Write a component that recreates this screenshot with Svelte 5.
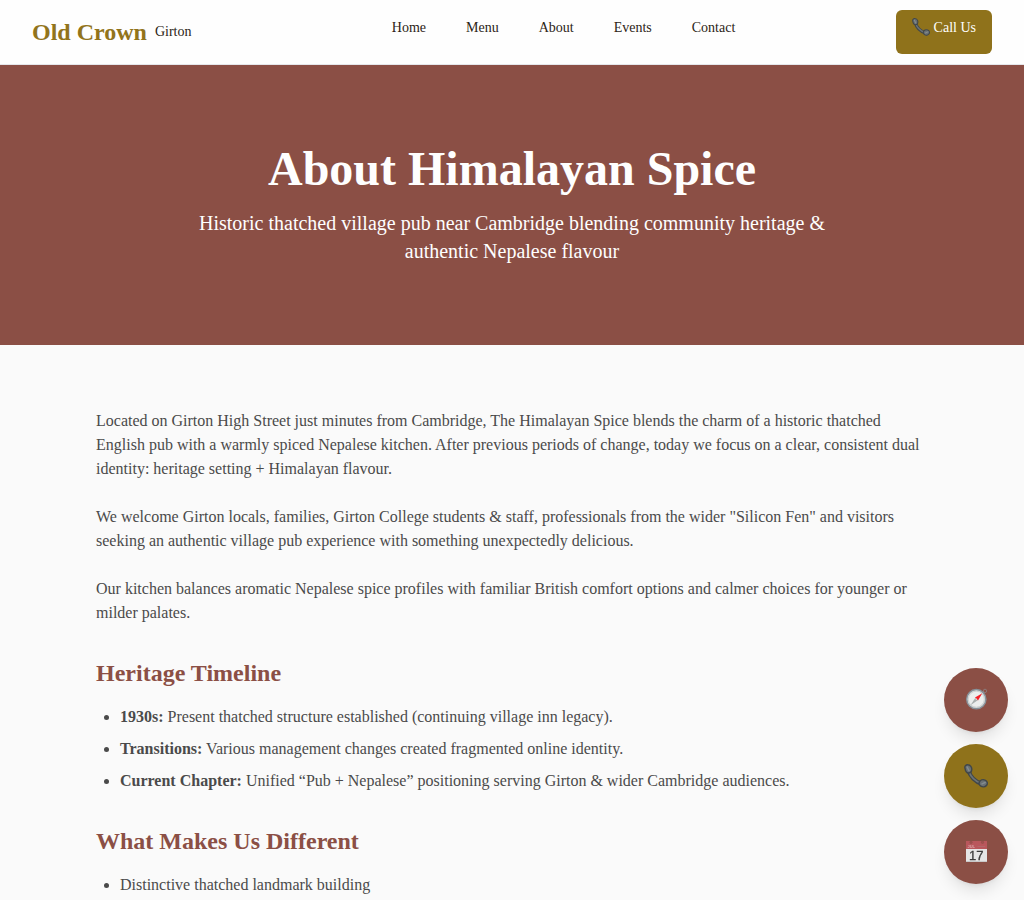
<script>
  const links = ['Home', 'Menu', 'About', 'Events', 'Contact'];
  const intro = [
    'Located on Girton High Street just minutes from Cambridge, The Himalayan Spice blends the charm of a historic thatched English pub with a warmly spiced Nepalese kitchen. After previous periods of change, today we focus on a clear, consistent dual identity: heritage setting + Himalayan flavour.',
    'We welcome Girton locals, families, Girton College students & staff, professionals from the wider "Silicon Fen" and visitors seeking an authentic village pub experience with something unexpectedly delicious.',
    'Our kitchen balances aromatic Nepalese spice profiles with familiar British comfort options and calmer choices for younger or milder palates.'
  ];
  const timeline = [
    ['1930s:', 'Present thatched structure established (continuing village inn legacy).'],
    ['Transitions:', 'Various management changes created fragmented online identity.'],
    ['Current Chapter:', 'Unified “Pub + Nepalese” positioning serving Girton & wider Cambridge audiences.']
  ];
</script>

{#snippet phone(size)}
  <svg width={size} height={size} viewBox="0 0 24 24" aria-hidden="true">
    <path d="M4.3 6C6 12.2 11.2 17.8 18 19.8" fill="none" stroke="#41474a" stroke-width="4.2" />
    <path d="M4.8 7C6.6 12.4 11.4 17.3 17 19.2" fill="none" stroke="#6c7376" stroke-width="1.7" />
    <path d="M.9 3.8C.5 1.8 2.2.5 4 .7C6.3.9 8 3.2 7.8 5.6C7.6 7.9 6.3 9 4.5 9C2.6 9 1.3 6.2.9 3.8Z" fill="#697073" stroke="#41474a" stroke-width="1.4" />
    <path d="M15.3 18.2C16.2 16 18.8 15.3 21 16.1C23.2 16.9 24 19.2 22.8 21C21.4 23.1 18.6 23.4 16.8 22.2C15.2 21.2 14.7 19.7 15.3 18.2Z" fill="#697073" stroke="#41474a" stroke-width="1.4" />
    <path d="M3.2 3.1L5 6.6M18 19.9L21.2 18.5" stroke="#858c8f" stroke-width="1.4" stroke-linecap="round" />
  </svg>
{/snippet}

<header>
  <div class="brand">
    <a class="logo" href="#home">Old Crown</a>
    <span class="place">Girton</span>
  </div>
  <nav aria-label="Main">
    <ul>
      {#each links as link}
        <li><a href={'#' + link.toLowerCase()}>{link}</a></li>
      {/each}
    </ul>
  </nav>
  <a class="call" href="#call">{@render phone(18)}<span>Call Us</span></a>
</header>

<section class="hero">
  <h1>About Himalayan Spice</h1>
  <p>Historic thatched village pub near Cambridge blending community heritage &amp; authentic Nepalese flavour</p>
</section>

<main>
  {#each intro as text}
    <p>{text}</p>
  {/each}
  <h2>Heritage Timeline</h2>
  <ul>
    {#each timeline as [label, text]}
      <li><strong>{label}</strong> {text}</li>
    {/each}
  </ul>
  <h2>What Makes Us Different</h2>
  <ul>
    <li>Distinctive thatched landmark building</li>
  </ul>
</main>

<div class="floating">
  <a href="#directions" aria-label="Directions">
    <svg width="24" height="24" viewBox="0 0 24 24" aria-hidden="true">
      <circle cx="21" cy="2.9" r="1.7" fill="none" stroke="#8c7a78" stroke-width="1" />
      <circle cx="12.3" cy="11.2" r="9.6" fill="#d9dcdb" stroke="#87929a" stroke-width="1.5" />
      <circle cx="12.3" cy="11.2" r="8" fill="#eceeed" stroke="#c2c8c8" stroke-width=".7" />
      <path d="M18.3 5.2L14 12.6L11 9.6Z" fill="#f51f27" />
      <path d="M13.7 12.3L6.5 17.3L11.2 10Z" fill="#aab0af" />
      <circle cx="12.4" cy="11.2" r=".8" fill="#d9dcdb" />
    </svg>
  </a>
  <a class="gold" href="#call" aria-label="Call us">{@render phone(24)}</a>
  <a href="#events" aria-label="Book a date">
    <svg width="24" height="24" viewBox="0 0 24 24" aria-hidden="true">
      <path d="M2 1H23V9H2Z" fill="#b9575c" />
      <path d="M2 9H23V22H2Z" fill="#e5e5e5" />
      <path d="M2 21H23V22H2Z" fill="#c9c9c9" />
      <circle cx="7" cy="2.3" r="1.2" fill="#a84e4e" stroke="#8e514c" stroke-width=".7" />
      <circle cx="18.5" cy="2.3" r="1.2" fill="#a84e4e" stroke="#8e514c" stroke-width=".7" />
      <text x="3.5" y="8" font-family="Liberation Sans, sans-serif" font-size="4" font-weight="700" fill="#dba6a8">JUL</text>
      <path d="M13.5 6.5H21" stroke="#b2676a" stroke-width="1" />
      <text x="12.3" y="20" text-anchor="middle" font-family="Liberation Sans, sans-serif" font-size="13" fill="#3b3b3b" stroke="#3b3b3b" stroke-width=".3">17</text>
    </svg>
  </a>
</div>

<style>
  :global(body) {
    margin: 0;
    background: #fafafa;
    color: #2c2416;
    font: 16px/24px "Liberation Serif", "Times New Roman", serif;
  }
  a {
    color: inherit;
    text-decoration: none;
  }
  header {
    display: flex;
    align-items: center;
    justify-content: space-between;
    min-height: 64px;
    padding: 0 32px;
    background: #fefefe;
    border-bottom: 1px solid #e5e7eb;
    font-size: 14px;
    line-height: 20px;
  }
  .brand {
    display: flex;
    align-items: center;
    gap: 8px;
  }
  .logo {
    color: #92741b;
    font-size: 24px;
    line-height: 32px;
    font-weight: 700;
  }
  nav ul {
    display: flex;
    gap: 40px;
    margin: 0;
    padding: 0 0 0 40px;
    list-style: none;
  }
  nav a {
    display: block;
    box-sizing: border-box;
    min-height: 44px;
    padding: 8px 0;
  }
  .call {
    display: flex;
    align-items: flex-start;
    gap: 4px;
    box-sizing: border-box;
    min-height: 44px;
    padding: 8px 16px;
    border-radius: 6px;
    background: #8f721b;
    color: #fefefe;
  }
  .hero {
    padding: 80px 32px;
    background: #8b4f45;
    color: #fefefe;
    text-align: center;
  }
  h1 {
    margin: 0 0 16px;
    font-size: 48px;
    line-height: 48px;
  }
  .hero p {
    max-width: 672px;
    margin: 0 auto;
    font-size: 20px;
    line-height: 28px;
  }
  main {
    box-sizing: border-box;
    max-width: 896px;
    margin: 0 auto;
    padding: 64px 32px 0;
    color: #4a4a4a;
  }
  main p {
    margin: 0 0 24px;
  }
  h2 {
    margin: 32px 0 16px;
    color: #8b4f45;
    font-size: 24px;
    line-height: 32px;
  }
  main ul {
    display: grid;
    gap: 8px;
    margin: 0;
    padding-left: 24px;
  }
  .floating {
    position: fixed;
    right: 16px;
    bottom: 16px;
    display: grid;
    gap: 12px;
  }
  .floating a {
    display: grid;
    place-items: center;
    width: 64px;
    height: 64px;
    border-radius: 50%;
    background: #8b4f45;
    box-shadow: 0 10px 15px -3px rgb(0 0 0 / 10%), 0 4px 6px -4px rgb(0 0 0 / 10%);
  }
  .floating .gold {
    background: #8f721b;
  }
</style>
